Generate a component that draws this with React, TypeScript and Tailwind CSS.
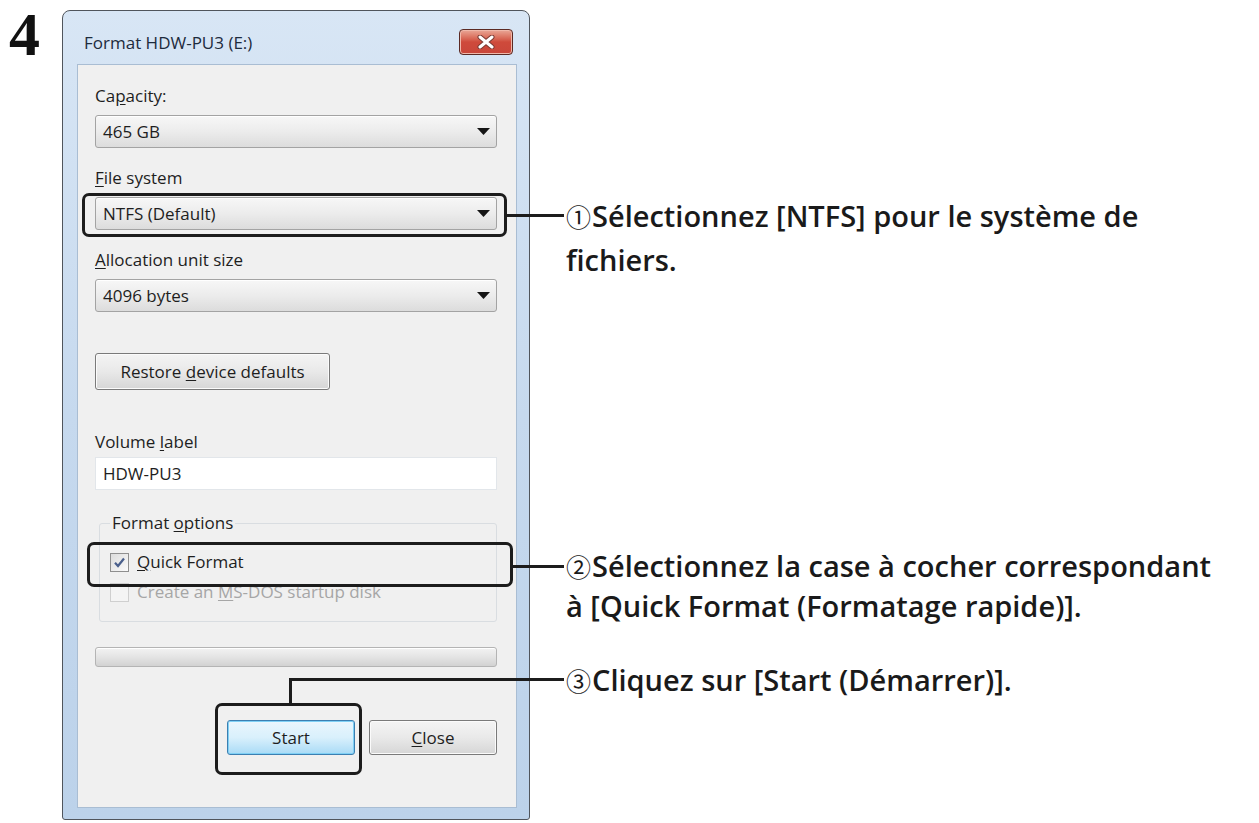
import React from "react";

function Label({ children, className = "" }: { children: React.ReactNode; className?: string }) {
  return <div className={`h-[22px] leading-[22px] text-[17px] text-[#1e1e1e] ${className}`}>{children}</div>;
}

function Combo({ value, className = "" }: { value: string; className?: string }) {
  return (
    <div
      className={`flex h-[33px] w-full items-center justify-between rounded-[3px] border border-[#a3a3a3] bg-linear-to-b from-[#f7f7f7] via-[#ececec] to-[#dcdcdc] pl-[7px] pr-[6px] text-[17px] text-[#1e1e1e] shadow-[inset_0_1px_0_#ffffff] ${className}`}
    >
      <span>{value}</span>
      <svg width="13" height="7" viewBox="0 0 13 7">
        <path d="M0 0H13L6.5 7Z" fill="#151515" />
      </svg>
    </div>
  );
}

function Checkbox({ checked, disabled }: { checked?: boolean; disabled?: boolean }) {
  return (
    <div
      className={`flex h-[19px] w-[19px] shrink-0 items-center justify-center border ${
        disabled ? "border-[#cfcfcf] bg-[#f4f4f4]" : "border-[#8f8f8f] bg-linear-to-br from-[#dcdcdc] to-[#fbfbfb]"
      }`}
    >
      {checked && (
        <svg width="13" height="13" viewBox="0 0 13 13">
          <path d="M2 6.8L5 10L11 2.5" fill="none" stroke="#4a5f8c" strokeWidth="2.2" />
        </svg>
      )}
    </div>
  );
}

function Window() {
  return (
    <div className="mt-[10px] flex h-[810px] w-[468px] shrink-0 flex-col rounded-t-[8px] rounded-b-[3px] border border-[#50555c] bg-linear-to-b from-[#d8e6f5] via-[#c6d9ee] to-[#bcd2ea] pb-[11px] pl-[14px] pr-[12px]">
      <div className="flex h-[53px] items-start">
        <div className="mt-[21px] ml-[7px] h-[22px] text-[17px] leading-[22px] text-[#1d2b3d]">Format HDW-PU3 (E:)</div>
        <div className="mt-[18px] mr-[4px] ml-auto flex h-[26px] w-[54px] items-center justify-center rounded-[4px] border border-[#5b2a24] bg-linear-to-b from-[#e9a797] via-[#cf4a3b] to-[#c9463a] shadow-[inset_0_0_0_1px_#f0b8aa]">
          <svg width="18" height="14" viewBox="0 0 18 14">
            <path d="M3 2L15 12M15 2L3 12" stroke="#7a3a33" strokeWidth="5" strokeLinecap="round" />
            <path d="M3 2L15 12M15 2L3 12" stroke="#ffffff" strokeWidth="3" strokeLinecap="round" />
          </svg>
        </div>
      </div>
      <div className="flex flex-1 flex-col border border-[#a9bdd3] bg-[#f0f0f0] pl-[17px] pr-[19px]">
        <Label className="mt-[20px]">
          Ca<u className="underline-offset-2">p</u>acity:
        </Label>
        <Combo value="465 GB" className="mt-[8px]" />
        <Label className="mt-[19px]">
          <u className="underline-offset-2">F</u>ile system
        </Label>
        <Combo value="NTFS (Default)" className="mt-[8px]" />
        <Label className="mt-[19px]">
          <u className="underline-offset-2">A</u>llocation unit size
        </Label>
        <Combo value="4096 bytes" className="mt-[8px]" />
        <div className="mt-[41px] flex h-[37px] w-[235px] items-center justify-center rounded-[3px] border border-[#7a7a7a] bg-linear-to-b from-[#f4f4f4] via-[#e9e9e9] to-[#d6d6d6] text-[17px] text-[#1e1e1e] shadow-[inset_0_0_0_1px_#fbfbfb]">
          <span>
            Restore <u className="underline-offset-2">d</u>evice defaults
          </span>
        </div>
        <Label className="mt-[41px]">
          Volume <u className="underline-offset-2">l</u>abel
        </Label>
        <div className="mt-[4px] flex h-[33px] w-full items-center border border-[#e2e6ea] bg-white pl-[7px] text-[17px] text-[#1e1e1e]">
          HDW-PU3
        </div>
        <fieldset className="mt-[22px] ml-[4px] rounded-[3px] border border-[#d9dde1] px-[10px] pb-[18px]">
          <legend className="h-[22px] px-[2px] text-[17px] leading-[22px] text-[#1e1e1e]">
            Format <u className="underline-offset-2">o</u>ptions
          </legend>
          <div className="mt-[17px] flex h-[22px] items-center gap-[8px] text-[17px] text-[#1e1e1e]">
            <Checkbox checked />
            <span>
              <u className="underline-offset-2">Q</u>uick Format
            </span>
          </div>
          <div className="mt-[8px] flex h-[22px] items-center gap-[8px] text-[17px] text-[#a6a6a6]">
            <Checkbox disabled />
            <span>
              Create an <u className="underline-offset-2">M</u>S-DOS startup disk
            </span>
          </div>
        </fieldset>
        <div className="mt-[25px] h-[20px] w-full rounded-[3px] border border-[#b4b4b4] bg-linear-to-b from-[#f3f3f3] via-[#e4e4e4] to-[#d2d2d2] shadow-[inset_0_1px_0_#ffffff]" />
        <div className="mt-[53px] flex justify-end gap-[14px]">
          <div className="flex h-[35px] w-[128px] items-center justify-center rounded-[3px] border border-[#3c7fb1] bg-linear-to-b from-[#eaf6fd] via-[#d9f0fc] to-[#a9dbf6] text-[17px] text-[#1e1e1e] shadow-[inset_0_0_0_1px_#7fd0f5]">
            Start
          </div>
          <div className="flex h-[35px] w-[128px] items-center justify-center rounded-[3px] border border-[#7a7a7a] bg-linear-to-b from-[#f4f4f4] via-[#e9e9e9] to-[#d6d6d6] text-[17px] text-[#1e1e1e] shadow-[inset_0_0_0_1px_#fbfbfb]">
            <span>
              <u className="underline-offset-2">C</u>lose
            </span>
          </div>
        </div>
      </div>
    </div>
  );
}

function Circ({ children }: { children: React.ReactNode }) {
  return (
    <span className="mr-[1px] font-['Noto_Sans_CJK_JP',sans-serif] text-[25px] font-normal">{children}</span>
  );
}

export default function App() {
  return (
    <div className="relative flex h-[823px] w-[1259px] overflow-hidden bg-white font-['Open_Sans',sans-serif]">
      <div className="w-[62px] shrink-0 pl-[9px]">
        <div className="font-['Liberation_Serif',serif] text-[62px] leading-[69px] font-bold text-[#111]">4</div>
      </div>
      <Window />
      <div className="ml-[36px] flex flex-col text-[29px] font-semibold text-[#1a1a1a]">
        <div className="mt-[194px] leading-[44px]">
          <div>
            <Circ>①</Circ>Sélectionnez [NTFS] pour le système de
          </div>
          <div>fichiers.</div>
        </div>
        <div className="mt-[264px] leading-[40px]">
          <div className="whitespace-nowrap">
            <Circ>②</Circ>Sélectionnez la case à cocher correspondant
          </div>
          <div>à [Quick Format (Formatage rapide)].</div>
        </div>
        <div className="mt-[34px] leading-[40px]">
          <div>
            <Circ>③</Circ>Cliquez sur [Start (Démarrer)].
          </div>
        </div>
      </div>

      {/* callout highlights */}
      <div className="pointer-events-none absolute left-[82px] top-[193px] h-[44px] w-[425px] rounded-[7px] border-[3px] border-[#1c1c1c]" />
      <div className="pointer-events-none absolute left-[507px] top-[214px] h-[3px] w-[57px] bg-[#1c1c1c]" />
      <div className="pointer-events-none absolute left-[87px] top-[542px] h-[45px] w-[426px] rounded-[7px] border-[3px] border-[#1c1c1c]" />
      <div className="pointer-events-none absolute left-[513px] top-[565px] h-[3px] w-[51px] bg-[#1c1c1c]" />
      <div className="pointer-events-none absolute left-[215px] top-[703px] h-[72px] w-[147px] rounded-[7px] border-[3px] border-[#1c1c1c]" />
      <div className="pointer-events-none absolute left-[289px] top-[678px] h-[26px] w-[3px] bg-[#1c1c1c]" />
      <div className="pointer-events-none absolute left-[289px] top-[678px] h-[3px] w-[275px] bg-[#1c1c1c]" />
    </div>
  );
}
